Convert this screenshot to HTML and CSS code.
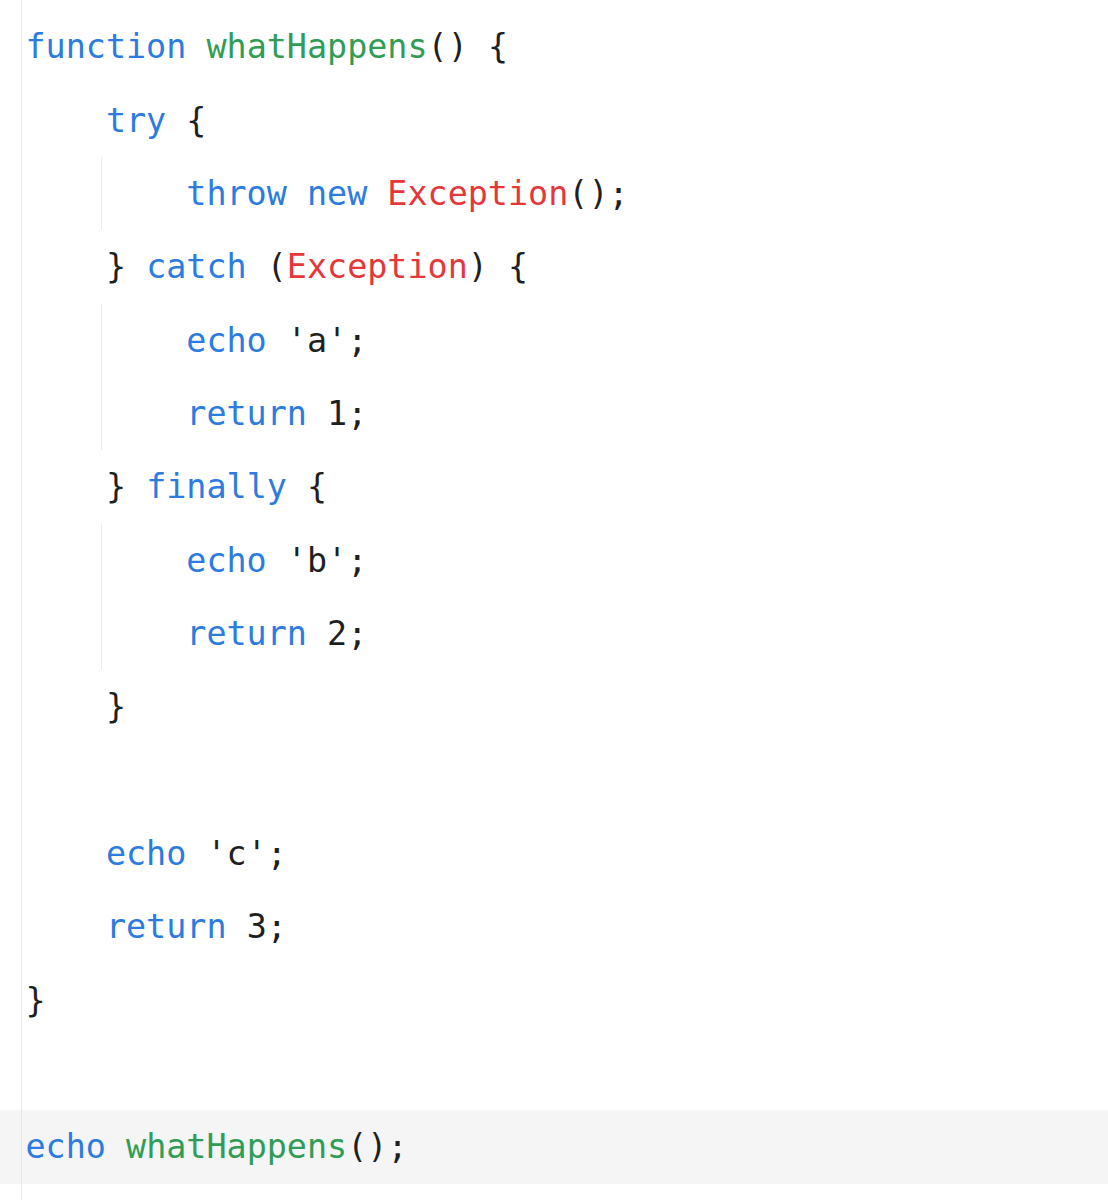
FILE: index.html
```html
<!DOCTYPE html>
<html lang="en">
<head>
<meta charset="utf-8">
<title>whatHappens</title>
<link rel="stylesheet" href="styles.css">
</head>
<body>
<div class="editor">
  <div class="line l0"><span class="kw">function</span> <span class="fn">whatHappens</span>() {</div>
  <div class="line l1"><span class="kw">try</span> {</div>
  <div class="guide">
    <div class="line"><span class="kw">throw</span> <span class="kw">new</span> <span class="cls">Exception</span>();</div>
  </div>
  <div class="line l1">} <span class="kw">catch</span> (<span class="cls">Exception</span>) {</div>
  <div class="guide">
    <div class="line"><span class="kw">echo</span> 'a';</div>
    <div class="line"><span class="kw">return</span> 1;</div>
  </div>
  <div class="line l1">} <span class="kw">finally</span> {</div>
  <div class="guide">
    <div class="line"><span class="kw">echo</span> 'b';</div>
    <div class="line"><span class="kw">return</span> 2;</div>
  </div>
  <div class="line l1">}</div>
  <div class="line l1"></div>
  <div class="line l1"><span class="kw">echo</span> 'c';</div>
  <div class="line l1"><span class="kw">return</span> 3;</div>
  <div class="line l0">}</div>
  <div class="line l0"></div>
  <div class="line l0 current"><span class="kw">echo</span> <span class="fn">whatHappens</span>();</div>
</div>
</body>
</html>
```

FILE: styles.css
```css
html, body {
  margin: 0;
  padding: 0;
  background: #ffffff;
}

body {
  min-height: 1200px;
  background: linear-gradient(to right, #ffffff 21px, #ebebeb 21px, #ebebeb 22px, #ffffff 22px);
}

.editor {
  padding-top: 10.3px;
  font-family: "DejaVu Sans Mono", "Liberation Mono", monospace;
  font-size: 33.4px;
  color: #1f1f1f;
}

.line {
  height: 73.33px;
  line-height: 73.33px;
  white-space: pre;
}

.l0 {
  padding-left: 25.5px;
}

.l1 {
  padding-left: calc(25.5px + 4ch);
}

.guide {
  margin-left: calc(27px + 4ch - 6px);
  border-left: 1px solid #ececec;
}

.guide .line {
  padding-left: calc(4ch + 3.5px);
}

.current {
  background: linear-gradient(to right, #f5f5f5 21px, #e6e6e6 21px, #e6e6e6 22px, #f5f5f5 22px);
}

.kw {
  color: #2c7be0;
}

.fn {
  color: #2f9d55;
}

.cls {
  color: #e5373a;
}
```
